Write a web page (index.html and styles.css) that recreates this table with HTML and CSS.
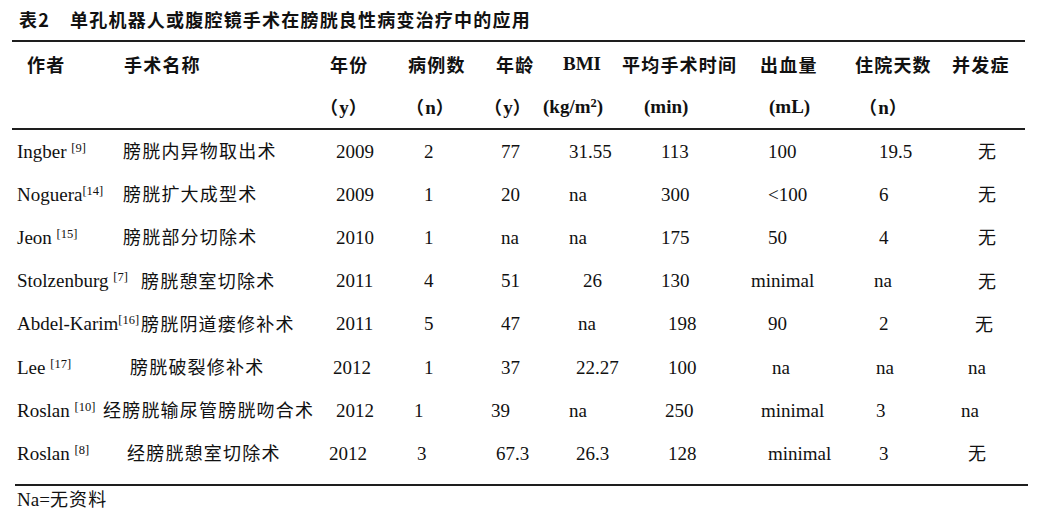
FILE: index.html
```html
<!DOCTYPE html>
<html lang="zh-CN">
<head>
<meta charset="utf-8">
<title>表2 单孔机器人或腹腔镜手术在膀胱良性病变治疗中的应用</title>
<link rel="stylesheet" href="styles.css">
</head>
<body>
<div class="page">
  <div class="caption"><span class="caption-no">表2</span>单孔机器人或腹腔镜手术在膀胱良性病变治疗中的应用</div>

  <div class="table">
    <div class="thead">
      <span>作者</span>
      <span>手术名称</span>
      <span>年份</span>
      <span>病例数</span>
      <span>年龄</span>
      <span class="lat">BMI</span>
      <span>平均手术时间</span>
      <span>出血量</span>
      <span>住院天数</span>
      <span>并发症</span>

      <span class="col3 sh-m10">（<span class="lat">y</span>）</span>
      <span class="sh-m2">（<span class="lat">n</span>）</span>
      <span class="sh-m12">（<span class="lat">y</span>）</span>
      <span class="lat sh-m20">(kg/m<sup>2</sup>)</span>
      <span class="lat sh-p22">(min)</span>
      <span class="lat sh-p9">(mL)</span>
      <span class="sh-p4">（<span class="lat">n</span>）</span>
    </div>

    <div class="tbody">
      <span class="lat">Ingber <sup>[9]</sup></span>
      <span class="cjk">膀胱内异物取出术</span>
      <span class="lat">2009</span><span class="lat">2</span><span class="lat">77</span><span class="lat">31.55</span><span class="lat">113</span><span class="lat">100</span><span class="lat">19.5</span><span class="cjk">无</span>

      <span class="lat">Noguera<sup>[14]</sup></span>
      <span class="cjk">膀胱扩大成型术</span>
      <span class="lat">2009</span><span class="lat">1</span><span class="lat">20</span><span class="lat">na</span><span class="lat">300</span><span class="lat">&lt;100</span><span class="lat">6</span><span class="cjk">无</span>

      <span class="lat">Jeon <sup>[15]</sup></span>
      <span class="cjk">膀胱部分切除术</span>
      <span class="lat">2010</span><span class="lat">1</span><span class="lat">na</span><span class="lat">na</span><span class="lat">175</span><span class="lat">50</span><span class="lat">4</span><span class="cjk">无</span>

      <span class="lat">Stolzenburg <sup>[7]</sup></span>
      <span class="cjk sh-p18">膀胱憩室切除术</span>
      <span class="lat">2011</span><span class="lat">4</span><span class="lat">51</span><span class="lat sh-p14">26</span><span class="lat">130</span><span class="lat sh-m17">minimal</span><span class="lat sh-m5">na</span><span class="cjk">无</span>

      <span class="lat">Abdel-Karim<sup>[16]</sup></span>
      <span class="cjk sh-p18">膀胱阴道瘘修补术</span>
      <span class="lat">2011</span><span class="lat">5</span><span class="lat">47</span><span class="lat sh-p9">na</span><span class="lat sh-p7">198</span><span class="lat">90</span><span class="lat">2</span><span class="cjk sh-m3">无</span>

      <span class="lat">Lee <sup>[17]</sup></span>
      <span class="cjk sh-p7">膀胱破裂修补术</span>
      <span class="lat sh-m3">2012</span><span class="lat">1</span><span class="lat">37</span><span class="lat sh-p7">22.27</span><span class="lat sh-p7">100</span><span class="lat sh-p4">na</span><span class="lat sh-m3">na</span><span class="lat sh-m10">na</span>

      <span class="lat">Roslan <sup>[10]</sup></span>
      <span class="cjk sh-m20">经膀胱输尿管膀胱吻合术</span>
      <span class="lat">2012</span><span class="lat sh-m10">1</span><span class="lat sh-m10">39</span><span class="lat">na</span><span class="lat sh-p4">250</span><span class="lat sh-m7">minimal</span><span class="lat sh-m3">3</span><span class="lat sh-m17">na</span>

      <span class="lat">Roslan <sup>[8]</sup></span>
      <span class="cjk sh-p4">经膀胱憩室切除术</span>
      <span class="lat sh-m7">2012</span><span class="lat sh-m7">3</span><span class="lat sh-m5">67.3</span><span class="lat sh-p7">26.3</span><span class="lat sh-p7">128</span><span class="lat">minimal</span><span class="lat">3</span><span class="cjk sh-m10">无</span>
    </div>
  </div>

  <div class="note"><span class="lat">Na=</span>无资料</div>
</div>
</body>
</html>
```

FILE: styles.css
```css
html, body {
  margin: 0;
  padding: 0;
  background: #ffffff;
}

body {
  color: #111111;
  font-family: "Noto Sans CJK SC", "Liberation Serif", serif;
  font-size: 18px;
  letter-spacing: 1.2px;
}

.page {
  width: 1046px;
  height: 522px;
  overflow: hidden;
}

.lat {
  font-family: "Liberation Serif", "Noto Sans CJK SC", serif;
  font-size: 19px;
  letter-spacing: 0;
}

sup {
  font-family: "Liberation Serif", serif;
  font-size: 12.5px;
  line-height: 0;
  vertical-align: 6px;
  letter-spacing: 0;
}

.caption {
  height: 40px;
  line-height: 38px;
  padding-left: 19px;
  font-weight: 700;
  white-space: nowrap;
}

.caption-no {
  display: inline-block;
  margin-right: 20px;
}

.caption-no,
.thead .lat {
  font-weight: 700;
}

.table {
  margin-left: 12px;
  width: 1013px;
  border-top: 2px solid #1e1e1e;
}

.thead {
  display: grid;
  grid-template-columns: 97px 206px 78px 88px 67px 59px 138px 95px 97px 73px;
  grid-auto-rows: 43px;
  align-items: center;
  padding-left: 15px;
  border-bottom: 2px solid #1e1e1e;
  font-weight: 700;
  white-space: nowrap;
}

.thead .col3 {
  grid-column-start: 3;
}

.tbody {
  display: grid;
  grid-template-columns: 106px 213px 88px 77px 68px 92px 107px 111px 99px 47px;
  grid-auto-rows: 43.2px;
  align-items: center;
  padding-left: 5px;
  padding-bottom: 8px;
  white-space: nowrap;
}

.thead > span,
.tbody > span {
  line-height: 24px;
}

.tbody > .cjk {
  padding-bottom: 3px;
}

.note {
  margin-left: 15px;
  width: 1011px;
  border-top: 2px solid #1e1e1e;
  line-height: 24px;
  padding-left: 2px;
  white-space: nowrap;
}

/* small hand adjustments of individual cells */
.sh-p4 { margin-left: 4px; }
.sh-p7 { margin-left: 7px; }
.sh-p9 { margin-left: 9px; }
.sh-p14 { margin-left: 14px; }
.sh-p18 { margin-left: 18px; }
.sh-p22 { margin-left: 22px; }
.sh-m2 { margin-left: -2px; }
.sh-m3 { margin-left: -3px; }
.sh-m5 { margin-left: -5px; }
.sh-m7 { margin-left: -7px; }
.sh-m10 { margin-left: -10px; }
.sh-m12 { margin-left: -12px; }
.sh-m17 { margin-left: -17px; }
.sh-m20 { margin-left: -20px; }
```
